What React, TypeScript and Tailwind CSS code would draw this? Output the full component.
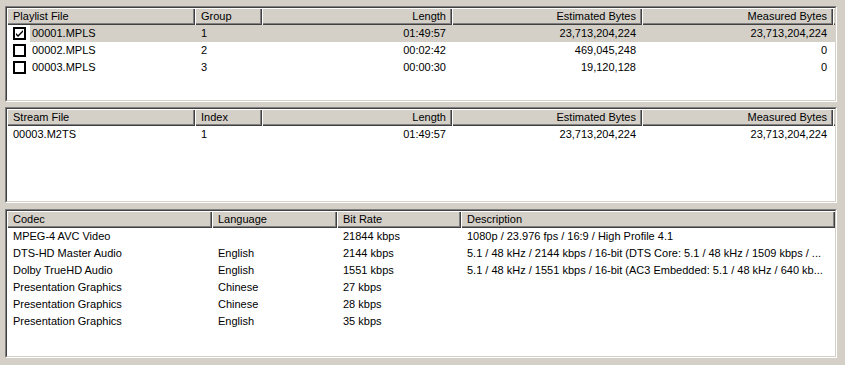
type Col = { title: string; w: number; right?: boolean };

const playlistCols: Col[] = [
  { title: "Playlist File", w: 188 },
  { title: "Group", w: 67 },
  { title: "Length", w: 190, right: true },
  { title: "Estimated Bytes", w: 190, right: true },
  { title: "Measured Bytes", w: 191, right: true },
];

const streamCols: Col[] = [
  { title: "Stream File", w: 188 },
  { title: "Index", w: 67 },
  { title: "Length", w: 190, right: true },
  { title: "Estimated Bytes", w: 190, right: true },
  { title: "Measured Bytes", w: 191, right: true },
];

const codecCols: Col[] = [
  { title: "Codec", w: 205 },
  { title: "Language", w: 125 },
  { title: "Bit Rate", w: 124 },
  { title: "Description", w: 374 },
];

const playlists = [
  { file: "00001.MPLS", group: "1", length: "01:49:57", est: "23,713,204,224", meas: "23,713,204,224", checked: true },
  { file: "00002.MPLS", group: "2", length: "00:02:42", est: "469,045,248", meas: "0", checked: false },
  { file: "00003.MPLS", group: "3", length: "00:00:30", est: "19,120,128", meas: "0", checked: false },
];

const streams = [["00003.M2TS", "1", "01:49:57", "23,713,204,224", "23,713,204,224"]];

const codecs = [
  ["MPEG-4 AVC Video", "", "21844 kbps", "1080p / 23.976 fps / 16:9 / High Profile 4.1"],
  ["DTS-HD Master Audio", "English", "2144 kbps", "5.1 / 48 kHz / 2144 kbps / 16-bit (DTS Core: 5.1 / 48 kHz / 1509 kbps / ..."],
  ["Dolby TrueHD Audio", "English", "1551 kbps", "5.1 / 48 kHz / 1551 kbps / 16-bit (AC3 Embedded: 5.1 / 48 kHz / 640 kb..."],
  ["Presentation Graphics", "Chinese", "27 kbps", ""],
  ["Presentation Graphics", "Chinese", "28 kbps", ""],
  ["Presentation Graphics", "English", "35 kbps", ""],
];

function Panel({ h, className = "", children }: { h: number; className?: string; children: React.ReactNode }) {
  return (
    <div
      className={`w-[832px] border border-t-[#808080] border-l-[#808080] border-r-white border-b-white ${className}`}
      style={{ height: h }}
    >
      <div className="h-full overflow-hidden border border-t-[#404040] border-l-[#404040] border-r-[#d4d0c8] border-b-[#d4d0c8] bg-white">
        {children}
      </div>
    </div>
  );
}

function Header({ cols }: { cols: Col[] }) {
  return (
    <div className="flex h-[17px] bg-[#d4d0c8]">
      {cols.map((c) => (
        <div
          key={c.title}
          className={`h-[17px] shrink-0 truncate px-[6px] leading-[16px] shadow-[inset_1px_1px_0_#fff,inset_-1px_-1px_0_#404040,inset_-2px_-2px_0_#808080] ${c.right ? "text-right" : "text-left"}`}
          style={{ width: c.w }}
        >
          {c.title}
        </div>
      ))}
      <div className="h-[17px] flex-1 shadow-[inset_1px_1px_0_#fff,inset_0_-1px_0_#404040,inset_0_-2px_0_#808080]" />
    </div>
  );
}

function Cell({ col, children }: { col: Col; children: React.ReactNode }) {
  return (
    <div
      className={`shrink-0 truncate whitespace-nowrap px-[6px] ${col.right ? "text-right" : "text-left"}`}
      style={{ width: col.w }}
    >
      {children}
    </div>
  );
}

function Check({ on }: { on: boolean }) {
  return (
    <span className="mr-[6px] flex h-[13px] w-[13px] shrink-0 items-center justify-center border-2 border-black bg-white">
      {on && (
        <svg width="7" height="7" viewBox="0 0 7 7">
          <path d="M0 3 L0 5 L2 7 L7 2 L7 0 L2 5 Z" fill="#000" />
        </svg>
      )}
    </span>
  );
}

export default function App() {
  return (
    <div className="flex h-[365px] w-[845px] flex-col gap-[5px] bg-[#d4d0c8] pl-[5px] pt-[6px] font-['Liberation_Sans',Arial,sans-serif] text-[11px] text-black">
      <Panel h={96}>
        <Header cols={playlistCols} />
        {playlists.map((p) => (
          <div key={p.file} className="flex h-[17px] items-center leading-[17px]">
            <div className="flex shrink-0 items-center pl-[6px]" style={{ width: playlistCols[0].w }}>
              <Check on={p.checked} />
              <span className={`-ml-[2px] h-[17px] flex-1 pl-[2px] ${p.checked ? "bg-[#d4d0c8]" : ""}`}>{p.file}</span>
            </div>
            <div className={`flex h-[17px] w-[645px] ${p.checked ? "bg-[#d4d0c8]" : ""}`}>
              <Cell col={playlistCols[1]}>{p.group}</Cell>
              <Cell col={playlistCols[2]}>{p.length}</Cell>
              <Cell col={playlistCols[3]}>{p.est}</Cell>
              <Cell col={playlistCols[4]}>{p.meas}</Cell>
            </div>
          </div>
        ))}
      </Panel>
      <Panel h={96}>
        <Header cols={streamCols} />
        {streams.map((r) => (
          <div key={r[0]} className="flex h-[17px] leading-[17px]">
            {r.map((v, i) => (
              <Cell key={i} col={streamCols[i]}>{v}</Cell>
            ))}
          </div>
        ))}
      </Panel>
      <Panel h={149} className="mt-px">
        <Header cols={codecCols} />
        {codecs.map((r, j) => (
          <div key={j} className="flex h-[17px] leading-[17px]">
            {r.map((v, i) => (
              <Cell key={i} col={codecCols[i]}>{v}</Cell>
            ))}
          </div>
        ))}
      </Panel>
    </div>
  );
}
